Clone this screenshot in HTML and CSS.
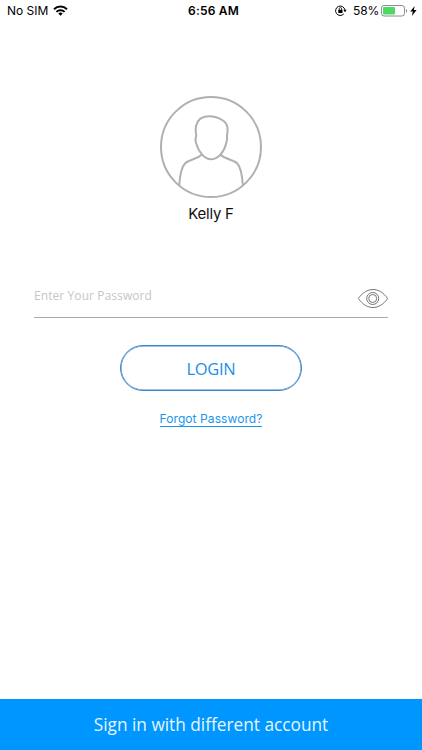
FILE: index.html
```html
<!DOCTYPE html>
<html lang="en">
<head>
<meta charset="utf-8">
<title>Login</title>
<link rel="stylesheet" href="styles.css">
</head>
<body>
<div class="screen">
  <header class="status">
    <div class="status-left">
      <span class="carrier">No SIM</span>
      <svg class="wifi" width="15" height="11" viewBox="0 0 15 11" fill="none" stroke="#000" stroke-width="2">
        <path d="M1 4.200a9.300 9.300 0 0 1 13 0M3.400 6.900a5.900 5.900 0 0 1 8.200 0"/>
        <path d="M7.500 10.800L5.300 8.500a3.300 3.300 0 0 1 4.400 0z" fill="#000" stroke="none"/>
      </svg>
    </div>
    <div class="clock">6:56 AM</div>
    <div class="status-right">
      <svg class="lock" width="12" height="11" viewBox="0 0 12 11" fill="none" stroke="#000">
        <path d="M8.800 8.900A4.700 4.700 0 1 1 9.900 4.800" stroke-width="1"/>
        <path d="M8.300 4.800h3.400L10 7.200z" fill="#000" stroke="none"/>
        <path d="M3.300 4.800h4.200v3.200H3.300z" fill="#000" stroke="none"/>
        <path d="M4.200 5V3.800a1.200 1.200 0 0 1 2.400 0V5" stroke-width=".8"/>
      </svg>
      <span class="percent">58%</span>
      <svg class="battery" width="27" height="12" viewBox="0 0 27 12">
        <rect x=".5" y=".5" width="23" height="10.500" rx="2.600" fill="#fff" stroke="#8c8c8c"/>
        <rect x="2" y="2" width="12" height="7.500" rx="1" fill="#4cd964"/>
        <path d="M25 4v3.800c1.600-.7 1.600-3.100 0-3.800z" fill="#8c8c8c"/>
      </svg>
      <svg class="bolt" width="7" height="10" viewBox="0 0 7 10"><path d="M4.700 0L.2 5.600h2.600L1.900 10l4.700-5.900H3.800z"/></svg>
    </div>
  </header>

  <main class="login">
    <svg class="avatar" width="102" height="102" viewBox="0 0 102 102" fill="none" stroke="#b0b0b0" stroke-width="2">
      <circle cx="51" cy="51" r="50"/>
      <path d="M36.300 40C35.300 36 35.500 33 36 30C37.500 23.500 42.500 20.300 49 20.300C54 20.300 59 22 63 24.500C68.500 28 68 34 67 40C67.700 43 66.500 46 66 48C64 56.500 57.500 63.300 51 63.300C44.500 63.300 38.300 55.500 36 47C35.300 44 35 42 36.300 40Z"/>
      <path d="M42 58.500C36 64 29.500 63 25 67.500C21 71.500 19.800 81 19.300 89M60 58.500C66 64 72.800 63 77.300 67.500C81 71.500 82.300 81 82.800 89"/>
    </svg>
    <div class="name">Kelly F</div>
    <div class="field">
      <span class="placeholder">Enter Your Password</span>
      <svg class="eye" width="32" height="20" viewBox="0 0 32 20" fill="none" stroke="#777">
        <path d="M1.400 9.500C9.500-2.500 22.500-2.500 30.600 9.500C22.500 21.500 9.500 21.500 1.400 9.500Z"/>
        <circle cx="15.700" cy="9.500" r="6"/><circle cx="15.700" cy="9.500" r="4"/>
      </svg>
    </div>
    <button class="submit"><span>LOGIN</span></button>
    <a class="forgot">Forgot Password?</a>
  </main>

  <footer class="switch"><span>Sign in with different account</span></footer>
</div>
</body>
</html>
```
FILE: styles.css
```css
* { box-sizing: border-box; }
body { margin: 0; background: #fff; }
.screen {
  display: flex;
  flex-direction: column;
  width: 422px;
  height: 750px;
  overflow: hidden;
  font-family: "Open Sans", sans-serif;
}
.status {
  display: grid;
  grid-template-columns: 1fr auto 1fr;
  align-items: center;
  height: 22px;
  padding: 0 5px 0 7px;
  font: 12px/22px Inter, sans-serif;
  color: #000;
}
.status svg { display: block; flex: none; }
.status-left, .status-right { display: flex; align-items: center; }
.status-right { justify-content: flex-end; }
.wifi { margin: -1px 0 0 5px; }
.clock {
  padding-left: 3px;
  font-size: 12px;
  font-weight: 600;
  letter-spacing: .2px;
}
.lock { margin: -1px 6px 0 0; }
.percent { margin-right: 2px; letter-spacing: -.2px; }
.battery { margin-top: -1px; }
.bolt { margin-left: 2px; margin-top: -1px; }
.login {
  flex: 1;
  display: flex;
  flex-direction: column;
  align-items: center;
  padding-top: 74px;
}
.avatar { display: block; }
.name {
  margin-top: 5px;
  font: 15px/22px Inter, sans-serif;
  letter-spacing: -.25px;
  color: #111;
}
.field {
  display: flex;
  justify-content: space-between;
  align-items: flex-start;
  width: 354px;
  height: 33px;
  margin-top: 60px;
  border-bottom: 1px solid #aaa;
}
.placeholder {
  font-size: 12px;
  line-height: 22px;
  letter-spacing: .08px;
  color: #c5c6ca;
}
.eye { margin: 4px -1px 0 0; }
.submit {
  width: 182px;
  height: 46px;
  margin: 27px 0 0;
  padding: 1px 0 0;
  border: 1px solid #3c86c8;
  border-radius: 23px;
  box-shadow: inset 0 0 0 .5px #3c86c8;
  background: #fff;
  font: 16.5px/43px "Open Sans", sans-serif;
  letter-spacing: -.3px;
  color: #1c8fe6;
}
.forgot {
  margin-top: 19px;
  height: 17px;
  font: 12px/17px Inter, sans-serif;
  letter-spacing: .08px;
  color: #1c96ec;
  border-bottom: 1px solid #1c96ec;
}
.switch {
  height: 51px;
  background: #0096ff;
  text-align: center;
  font-size: 17.25px;
  line-height: 52px;
  color: #e4f5ff;
}
```
